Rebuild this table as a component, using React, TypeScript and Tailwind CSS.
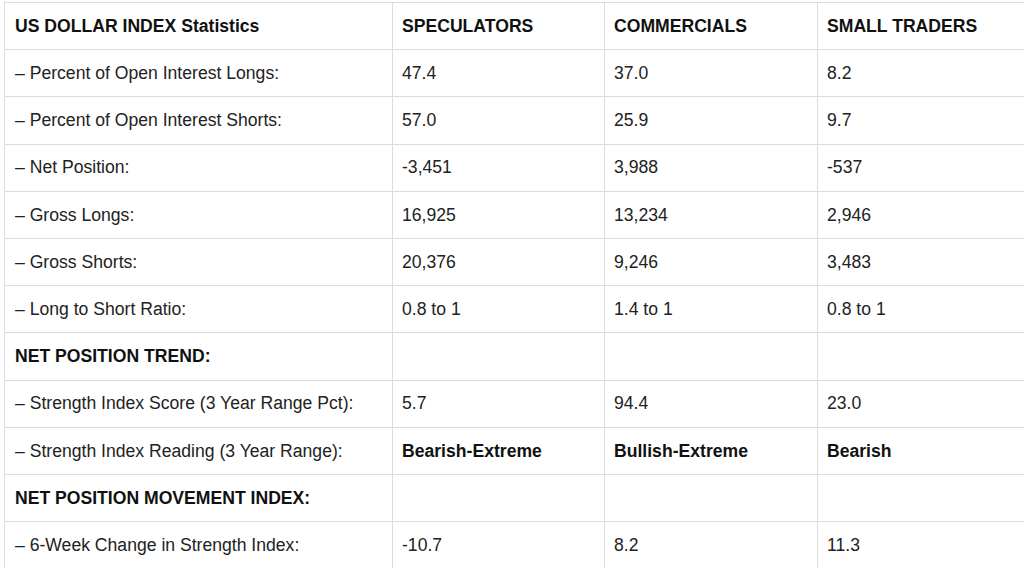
const rows: { label: string; values: string[]; heading?: boolean; boldValues?: boolean }[] = [
  { label: '– Percent of Open Interest Longs:', values: ['47.4', '37.0', '8.2'] },
  { label: '– Percent of Open Interest Shorts:', values: ['57.0', '25.9', '9.7'] },
  { label: '– Net Position:', values: ['-3,451', '3,988', '-537'] },
  { label: '– Gross Longs:', values: ['16,925', '13,234', '2,946'] },
  { label: '– Gross Shorts:', values: ['20,376', '9,246', '3,483'] },
  { label: '– Long to Short Ratio:', values: ['0.8 to 1', '1.4 to 1', '0.8 to 1'] },
  { label: 'NET POSITION TREND:', values: ['', '', ''], heading: true },
  { label: '– Strength Index Score (3 Year Range Pct):', values: ['5.7', '94.4', '23.0'] },
  {
    label: '– Strength Index Reading (3 Year Range):',
    values: ['Bearish-Extreme', 'Bullish-Extreme', 'Bearish'],
    boldValues: true,
  },
  { label: 'NET POSITION MOVEMENT INDEX:', values: ['', '', ''], heading: true },
  { label: '– 6-Week Change in Strength Index:', values: ['-10.7', '8.2', '11.3'] },
]

const cell = 'h-[47.2px] border border-[#dcdcdc] px-[9px] py-0 align-middle'

export default function App() {
  return (
    <div className="h-[568px] w-[1024px] overflow-hidden bg-white pl-[4px] pt-[2px] font-['Liberation_Sans',Arial,sans-serif] text-[17.6px] text-[#222]">
      <table className="w-[1030px] table-fixed border-collapse text-left">
        <colgroup>
          <col className="w-[388px]" />
          <col className="w-[212px]" />
          <col className="w-[213px]" />
          <col className="w-[217px]" />
        </colgroup>
        <thead>
          <tr>
            <th className={`${cell} pl-[10px] font-bold text-[#111]`}>US DOLLAR INDEX Statistics</th>
            <th className={`${cell} font-bold text-[#111]`}>SPECULATORS</th>
            <th className={`${cell} font-bold text-[#111]`}>COMMERCIALS</th>
            <th className={`${cell} font-bold text-[#111]`}>SMALL TRADERS</th>
          </tr>
        </thead>
        <tbody>
          {rows.map((row) => (
            <tr key={row.label}>
              <td className={`${cell} pl-[10px] ${row.heading ? 'font-bold text-[#111]' : ''}`}>{row.label}</td>
              {row.values.map((v, i) => (
                <td key={i} className={`${cell} ${row.boldValues ? 'font-bold text-[#111]' : ''}`}>
                  {v}
                </td>
              ))}
            </tr>
          ))}
        </tbody>
      </table>
    </div>
  )
}
